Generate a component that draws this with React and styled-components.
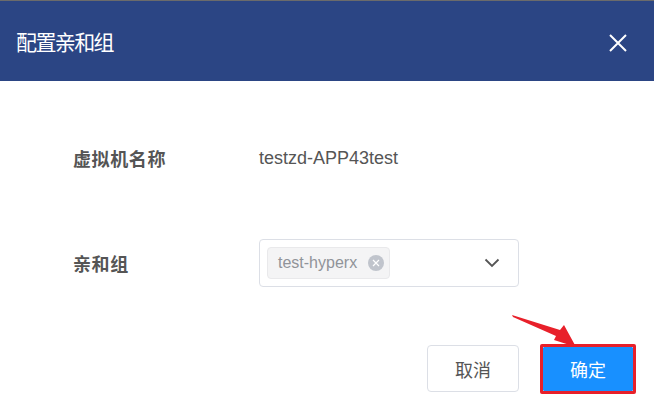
import React from "react";
import styled, { createGlobalStyle } from "styled-components";

const GlobalStyle = createGlobalStyle`
  html, body {
    margin: 0;
    padding: 0;
    background: #fff;
  }
  body {
    font-family: "Liberation Sans", "Noto Sans CJK SC", Arial, sans-serif;
  }
`;

const Dialog = styled.div`
  position: relative;
  width: 654px;
  height: 413px;
  background: #fff;
  border-top: 1px solid #6b6b6b;
  box-sizing: border-box;
  overflow: hidden;
`;

const Header = styled.div`
  height: 80px;
  background: #2b4584;
  display: flex;
  align-items: center;
  justify-content: space-between;
  padding: 0 26px 0 16px;
`;

const Title = styled.h2`
  margin: 0;
  color: #fff;
  font-family: "Noto Sans CJK SC", sans-serif;
  font-size: 21px;
  font-weight: 400;
  letter-spacing: -1.6px;
`;

const CloseButton = styled.button`
  border: 0;
  background: none;
  padding: 0;
  width: 20px;
  height: 20px;
  display: flex;
  margin-top: 4px;
  cursor: pointer;
`;

const Body = styled.div`
  padding: 53px 21px 0 73px;
  display: flex;
  flex-direction: column;
  gap: 57px;
`;

const Row = styled.div`
  display: flex;
  align-items: center;
  height: 48px;
`;

const Label = styled.div`
  width: 186px;
  color: #555;
  font-family: "Noto Sans CJK SC", sans-serif;
  font-size: 18px;
  font-weight: 700;
  letter-spacing: 0.6px;
`;

const Value = styled.div`
  color: #555;
  font-size: 18px;
`;

const Select = styled.div`
  width: 260px;
  height: 48px;
  box-sizing: border-box;
  border: 1px solid #dcdfe6;
  border-radius: 4px;
  display: flex;
  align-items: center;
  justify-content: space-between;
  padding: 0 18px 0 7px;
`;

const Tag = styled.span`
  display: inline-flex;
  align-items: center;
  gap: 11px;
  height: 32px;
  box-sizing: border-box;
  padding: 0 5px 0 10px;
  background: #f4f4f5;
  border: 1px solid #e9e9eb;
  border-radius: 4px;
  color: #909399;
  font-size: 16px;
`;

const TagClose = styled.span`
  width: 16px;
  height: 16px;
  border-radius: 50%;
  background: #c0c4cc;
  display: inline-flex;
  align-items: center;
  justify-content: center;
`;

const Footer = styled.div`
  display: flex;
  justify-content: flex-end;
  align-items: center;
  gap: 24px;
  margin-top: 1px;
`;

const Button = styled.button`
  position: relative;
  width: ${(p) => (p.primary ? "90px" : "92px")};
  height: ${(p) => (p.primary ? "44px" : "47px")};
  box-sizing: border-box;
  border: 1px solid ${(p) => (p.primary ? "#1890ff" : "#dcdfe6")};
  border-radius: ${(p) => (p.highlight ? "1px" : "4px")};
  background: ${(p) => (p.primary ? "#1890ff" : "#fff")};
  color: ${(p) => (p.primary ? "#fff" : "#555")};
  font-family: "Noto Sans CJK SC", sans-serif;
  font-size: 18px;
  outline: none;
  cursor: pointer;

  &::after {
    content: "";
    display: ${(p) => (p.highlight ? "block" : "none")};
    position: absolute;
    inset: -4px;
    border: 3px solid #e8202a;
    border-radius: 2px;
  }
`;

const Arrow = styled.svg`
  position: absolute;
  left: 508px;
  top: 310px;
  width: 72px;
  height: 40px;
  pointer-events: none;
`;

export default function App() {
  return (
    <>
      <GlobalStyle />
      <Dialog>
        <Header>
          <Title>配置亲和组</Title>
          <CloseButton aria-label="close">
            <svg width="20" height="20" viewBox="0 0 20 20">
              <path d="M2 2 L18 18 M18 2 L2 18" stroke="#fff" strokeWidth="2" />
            </svg>
          </CloseButton>
        </Header>
        <Body>
          <Row>
            <Label>虚拟机名称</Label>
            <Value>testzd-APP43test</Value>
          </Row>
          <Row>
            <Label>亲和组</Label>
            <Select>
              <Tag>
                test-hyperx
                <TagClose>
                  <svg width="8" height="8" viewBox="0 0 8 8">
                    <path d="M1 1 L7 7 M7 1 L1 7" stroke="#fff" strokeWidth="1.2" />
                  </svg>
                </TagClose>
              </Tag>
              <svg width="16" height="10" viewBox="0 0 16 10">
                <path d="M1.5 1.5 L8 8 L14.5 1.5" fill="none" stroke="#555" strokeWidth="1.8" />
              </svg>
            </Select>
          </Row>
          <Footer>
            <Button>取消</Button>
            <Button primary highlight>确定</Button>
          </Footer>
        </Body>
        <Arrow viewBox="0 0 72 40">
          <polygon points="4,4 5,6 48,25 46,29 68,36 56,14 52,19" fill="#e8202a" />
        </Arrow>
      </Dialog>
    </>
  );
}
